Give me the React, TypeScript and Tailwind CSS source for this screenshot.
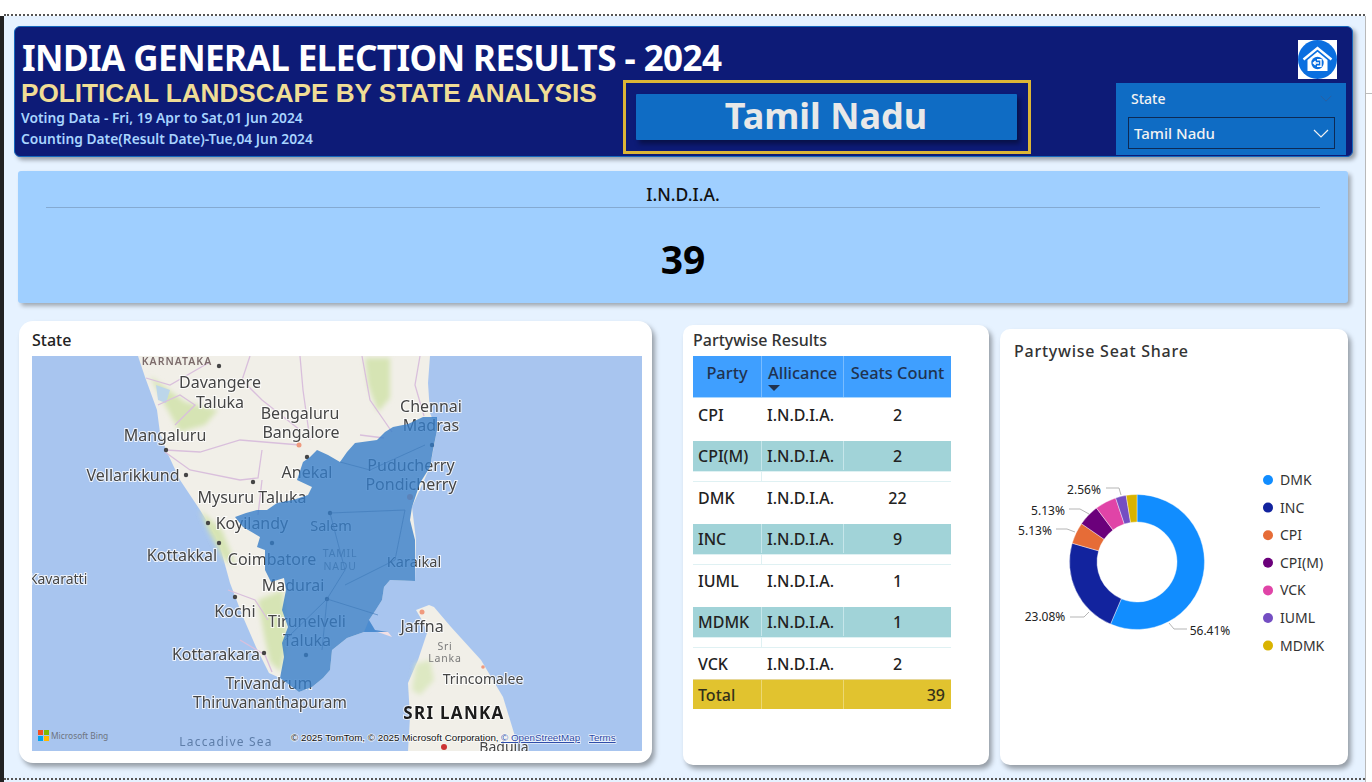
import React from 'react';

const UI = "font-['Noto_Sans',sans-serif]";

interface Row {
  party: string;
  seats: number;
  band: boolean;
  height: string;
}

const rows: Row[] = [
  { party: 'CPI', seats: 2, band: false, height: 'h-[43px] pb-[10px]' },
  { party: 'CPI(M)', seats: 2, band: true, height: 'h-[30px] pb-[1px]' },
  { party: 'DMK', seats: 22, band: false, height: 'h-[42px] pb-[11px]' },
  { party: 'INC', seats: 9, band: true, height: 'h-[30px] pb-[1px]' },
  { party: 'IUML', seats: 1, band: false, height: 'h-[42px] pb-[11px]' },
  { party: 'MDMK', seats: 1, band: true, height: 'h-[30px] pb-[1px]' },
  { party: 'VCK', seats: 2, band: false, height: 'h-[31px]' },
];

const slices = [
  { name: 'DMK', value: 22, color: '#118dff' },
  { name: 'INC', value: 9, color: '#12239e' },
  { name: 'CPI', value: 2, color: '#e66c37' },
  { name: 'CPI(M)', value: 2, color: '#6b007b' },
  { name: 'VCK', value: 2, color: '#e044a7' },
  { name: 'IUML', value: 1, color: '#744ec2' },
  { name: 'MDMK', value: 1, color: '#d9b300' },
];

const arcPath = (from: number, to: number, cx: number, cy: number, r1: number, r2: number) => {
  const p = (a: number, r: number) => {
    const t = (a / 39) * Math.PI * 2;
    return `${(cx + Math.sin(t) * r).toFixed(2)} ${(cy - Math.cos(t) * r).toFixed(2)}`;
  };
  const large = (to - from) / 39 > 0.5 ? 1 : 0;
  return `M${p(from, r2)} A${r2} ${r2} 0 ${large} 1 ${p(to, r2)} L${p(to, r1)} A${r1} ${r1} 0 ${large} 0 ${p(from, r1)} Z`;
};

const HomeIcon = () => (
  <svg width="39" height="39" viewBox="0 0 39 39" className="shrink-0">
    <rect width="39" height="39" fill="#ffffff" />
    <ellipse cx="19.5" cy="19.5" rx="19.5" ry="19.5" fill="#0b6fe0" />
    <path d="M5.5 19.5 L19.5 8 L33.5 19.5" fill="none" stroke="#ffffff" strokeWidth="2.4" />
    <path d="M9.5 20 L19.5 11.8 L29.5 20 V31 H9.5 Z" fill="#ffffff" />
    <circle cx="19.5" cy="23" r="6.2" fill="#0b6fe0" />
    <path d="M19 19.8 H23 V26.2 H19" fill="none" stroke="#ffffff" strokeWidth="1.4" />
    <path d="M21 23 H15.5 M17.6 20.9 L15.4 23 L17.6 25.1" fill="none" stroke="#ffffff" strokeWidth="1.4" />
  </svg>
);

const Chevron = ({ color, size }: { color: string; size: number }) => (
  <svg width={size} height={size / 2 + 1} viewBox="0 0 16 9">
    <path d="M1 1 L8 8 L15 1" fill="none" stroke={color} strokeWidth="1.2" />
  </svg>
);

const labels: [string, number, number, number?][] = [
  ['Davangere', 220, 388],
  ['Taluka', 220, 408],
  ['Bengaluru', 300, 419],
  ['Bangalore', 301, 438],
  ['Chennai', 431, 412],
  ['Madras', 431, 431],
  ['Mangaluru', 165, 441],
  ['Vellarikkund', 133, 481],
  ['Anekal', 307, 478],
  ['Puducherry', 411, 471],
  ['Pondicherry', 411, 490],
  ['Mysuru Taluka', 252, 503],
  ['Koyilandy', 252, 529],
  ['Salem', 331, 531, 14.5],
  ['Kottakkal', 182, 561],
  ['Coimbatore', 272, 565],
  ['Karaikal', 414, 567, 14.5],
  ['Kavaratti', 58, 584, 14],
  ['Madurai', 293, 591],
  ['Kochi', 235, 617],
  ['Tirunelveli', 307, 627],
  ['Taluka', 307, 646],
  ['Kottarakara', 216, 660],
  ['Jaffna', 422, 632],
  ['Trincomalee', 483, 684, 14],
  ['Trivandrum', 269, 689],
  ['Thiruvananthapuram', 270, 708, 15.4],
  ['Badulla', 504, 752, 14],
];

const dots: [number, number][] = [
  [219, 366], [166, 450], [186, 475], [253, 482], [307, 457], [208, 523], [219, 543], [235, 597],
  [264, 653], [327, 599], [306, 655], [272, 543], [330, 513], [432, 445],
];

const MapSketch = () => (
  <svg viewBox="32 356 610 395" width="610" height="395" className="block" fontFamily="'Noto Sans', sans-serif">
    <defs>
      <filter id="soft" x="0" y="0" width="100%" height="100%">
        <feGaussianBlur stdDeviation="0.35" />
      </filter>
      <filter id="wash" x="-20%" y="-20%" width="140%" height="140%">
        <feGaussianBlur stdDeviation="2.5" />
      </filter>
    </defs>
    <rect x="32" y="356" width="610" height="395" fill="#a8c5ef" />
    <g filter="url(#soft)">
      {/* mainland */}
      <path
        d="M138 356 L145 377 L157 410 L160 433 L166 450 L180 480 L200 510 L208 523 L219 543 L221 550 L230 583 L243 617 L256 647 L269 673 L280 678 L299 692 L312 687 L323 678 L330 670 L332 650 L347 638 L364 632 L369 620 L382 600 L384 587 L390 580 L415 581 L416 540 L412 507 L430 467 L437 430 L430 413 L428 383 L430 356 Z"
        fill="#f1efe8"
      />
      {/* greenery */}
      <g filter="url(#wash)" fill="#d6e4b4">
        <path d="M150 376 L185 402 L218 410 L205 425 L180 432 L165 405 Z" />
        <path d="M365 358 L390 358 L390 398 L378 412 L368 385 Z" />
        <path d="M200 510 L222 530 L236 566 L224 560 L208 530 Z" />
        <path d="M258 600 L283 590 L287 640 L281 672 L270 662 L264 635 Z" />
        <path d="M418 664 L432 660 L434 680 L420 695 L413 690 Z" />
      </g>
      <path d="M156 385 L170 390 L166 403 L158 400 Z" fill="#bcd6ea" />
      {/* roads */}
      <g fill="none" stroke="#d9bfdc" strokeWidth="1.3">
        <path d="M165 450 L200 452 L240 440 L300 445 M165 452 L190 470 L240 480 L258 478 L262 450" />
        <path d="M158 405 L180 395 L195 405 L175 425 M146 378 L170 385 L210 362 M250 356 L242 380 L262 400 L300 430" />
        <path d="M362 356 L370 400 L392 432 M420 356 L415 385 L424 416 M300 356 L303 390 L310 440" />
        <path d="M360 435 L384 438 M262 480 L258 515 M228 590 L255 600 L268 620 M240 640 L265 655 L272 672" />
      </g>
      {/* Sri Lanka */}
      <path
        d="M429 605 L434 607 L451 627 L481 660 L503 697 L514 733 L516 751 L408 751 L410 717 L408 683 L418 660 L427 633 L423 622 L416 610 Z"
        fill="#f1efe8"
      />
      <path d="M416 664 L430 660 L434 680 L420 695 L412 690 Z" fill="#dde8c2" filter="url(#wash)" />
      <path d="M375 631 L388 632 L392 637 Z" fill="#f3e0e4" />
      {/* place labels */}
      <g fill="#444444" textAnchor="middle" stroke="#ffffff" strokeOpacity="0.8" strokeWidth="2" paintOrder="stroke">
        {labels.map(([name, x, y, size]) => (
          <text key={`${name}${y}`} x={x} y={y} fontSize={size ?? 16}>
            {name}
          </text>
        ))}
      </g>
      <text x="177" y="365" textAnchor="middle" fontSize="10.5" fontWeight="600" letterSpacing="1" fill="#7b6b6b">KARNATAKA</text>
      <g fill="#7a7a7a" fontSize="10.5" textAnchor="middle" letterSpacing="0.8">
        <text x="445" y="650">Sri</text>
        <text x="445" y="662">Lanka</text>
        <text x="340" y="557">TAMIL</text>
        <text x="340" y="570">NADU</text>
      </g>
      <text x="454" y="719" textAnchor="middle" fontSize="17" fontWeight="700" letterSpacing="1.3" fill="#1b1b1b" stroke="#ffffff" strokeOpacity="0.7" strokeWidth="2" paintOrder="stroke">SRI LANKA</text>
      <text x="226" y="746" textAnchor="middle" fontSize="12" letterSpacing="1.2" fill="#5d7da8">Laccadive Sea</text>
      {dots.map(([x, y]) => (
        <circle key={`${x}-${y}`} cx={x} cy={y} r="2.2" fill="#444444" />
      ))}
      <circle cx="422" cy="612" r="2.5" fill="#ef9a7e" />
      <circle cx="410" cy="497" r="3" fill="#ef9a7e" />
      <circle cx="299" cy="445" r="2.5" fill="#ef9a7e" />
      <circle cx="444" cy="747" r="3" fill="#cc3333" />
      <circle cx="483" cy="667" r="1.8" fill="#ef9a7e" />
      {/* Tamil Nadu overlay */}
      <path
        d="M235 517 L246 513 L257 510 L267 510 L277 503 L293 500 L308 495 L312 487 L297 480 L303 462 L310 457 L317 450 L328 455 L340 462 L347 452 L355 443 L377 440 L385 432 L393 427 L408 424 L423 417 L437 417 L437 430 L433 450 L430 467 L420 483 L412 507 L410 520 L415 540 L415 581 L390 580 L384 587 L382 600 L375 611 L369 620 L375 630 L388 632 L364 632 L347 638 L332 650 L330 670 L323 678 L312 687 L299 692 L280 678 L284 657 L282 643 L288 627 L282 610 L286 590 L284 578 L271 582 L265 570 L265 550 L257 547 L260 537 L243 527 Z"
        fill="#367dc8"
        fillOpacity="0.8"
      />
      <g fill="none" stroke="#3f78b8" strokeWidth="1" opacity="0.6">
        <path d="M340 462 L370 470 L425 445 M330 513 L405 510 M330 513 L345 570 L327 599 L322 650 M405 510 L395 560 L345 585 M327 599 L285 640 M327 599 L378 615" />
      </g>
    </g>
    {/* Bing mark */}
    <rect x="38" y="730" width="5" height="5" fill="#f25022" />
    <rect x="44" y="730" width="5" height="5" fill="#7fba00" />
    <rect x="38" y="736" width="5" height="5" fill="#00a4ef" />
    <rect x="44" y="736" width="5" height="5" fill="#ffb900" />
    <text x="51" y="739" fontSize="8.4" fill="#6d7480">Microsoft Bing</text>
    <g fontFamily="'Liberation Sans', sans-serif" fontSize="9.8" stroke="#ffffff" strokeOpacity="0.8" strokeWidth="1.5" paintOrder="stroke">
      <text x="291" y="741" fill="#111111">© 2025 TomTom, © 2025 Microsoft Corporation,</text>
      <text x="501" y="741" fill="#2b4aa8" textDecoration="underline">© OpenStreetMap</text>
      <text x="589" y="741" fill="#2b4aa8" textDecoration="underline">Terms</text>
    </g>
  </svg>
);

const pctLabels: [string, number, number, string][] = [
  ['56.41%', 1210, 635, 'M1169 623 L1174 629 L1187 629'],
  ['23.08%', 1045, 621, 'M1089 612 L1084 617 L1070 617'],
  ['5.13%', 1035, 535, 'M1075 532 L1067 529 L1056 529'],
  ['5.13%', 1048, 515, 'M1089 514 L1080 509 L1069 509'],
  ['2.56%', 1084, 494, 'M1121 495 L1119 488 L1106 488'],
];

const Donut = () => {
  let at = 0;
  return (
    <svg viewBox="1000 450 348 230" width="348" height="230" className="block" fontFamily="'Noto Sans', sans-serif">
      {slices.map((s) => {
        const d = arcPath(at, at + s.value, 1137, 562, 40, 67.5);
        at += s.value;
        return <path key={s.name} d={d} fill={s.color} stroke="#ffffff" strokeWidth="0.4" />;
      })}
      {pctLabels.map(([t, x, y, line]) => (
        <g key={`${t}${y}`}>
          <path d={line} fill="none" stroke="#b5b5b5" strokeWidth="1" />
          <text x={x} y={y} textAnchor="middle" fontSize="12" fill="#222222">{t}</text>
        </g>
      ))}
      {slices.map((s, i) => (
        <g key={s.name}>
          <circle cx="1268" cy={480 + i * 27.6} r="5" fill={s.color} />
          <text x="1280" y={485 + i * 27.6} fontSize="14" fill="#333333">{s.name}</text>
        </g>
      ))}
    </svg>
  );
};

const App: React.FC = () => {
  return (
    <div className={`${UI} w-[1372px] h-[782px] overflow-hidden bg-white flex flex-col`}>
      {/* top dotted edge */}
      <div className="h-[16px] ml-[4px] w-[1361px] border-b-2 border-dotted border-[#555555]" />

      <div className="flex h-[766px]">
        <div className="w-[4px] bg-[#222222]" />
        <div className="w-[1362px] bg-[#e6f2ff] border-r border-[#b9b9b9] flex flex-col">
          {/* Header */}
          <header className="mt-[10px] ml-[10px] w-[1339px] h-[131px] bg-[#0d1b77] rounded-md border border-[#1668bd] shadow-[3px_3px_4px_rgba(0,0,0,0.35)] flex flex-col">
            <div className="h-[55px] flex items-start justify-between pl-[7px] pr-[15px] pt-[13px]">
              <h1 className="text-[35px] leading-[36px] font-bold text-white whitespace-nowrap tracking-[-0.55px]">
                INDIA GENERAL ELECTION RESULTS - 2024
              </h1>
              <HomeIcon />
            </div>
            <div className="flex items-start pl-[6px]">
              <div className="w-[602px]">
                <div className="font-['Liberation_Sans',sans-serif] font-bold text-[26.15px] leading-[28px] text-[#f0dd95] whitespace-nowrap -mt-[3px]">
                  POLITICAL LANDSCAPE BY STATE ANALYSIS
                </div>
                <div className="text-[13.8px] leading-[21px] font-semibold text-[#a8d4ff] whitespace-nowrap">
                  <div>Voting Data - Fri, 19 Apr to Sat,01 Jun 2024</div>
                  <div>Counting Date(Result Date)-Tue,04 Jun 2024</div>
                </div>
              </div>
              <div className="mt-[-2px] w-[408px] h-[74px] border-[3px] border-[#dcb636] flex items-center justify-center pr-[2px]">
                <div className="w-[381px] h-[46px] bg-[#0f6cc4] rounded-[1px] shadow-[3px_4px_5px_rgba(0,0,0,0.4)] flex items-center justify-center pb-[2px] text-[36px] font-bold text-[#e8e8e8]">
                  Tamil Nadu
                </div>
              </div>
              <div className="ml-[85px] mt-[1px] w-[230px] h-[72px] bg-[#0f6cc4] px-[12px] pt-[6px]">
                <div className="flex items-center justify-between h-[19px] pl-[3px] pr-[2px]">
                  <span className="text-[14px] font-medium text-[#f2f2f2]">State</span>
                  <Chevron color="#2a5f9e" size={12} />
                </div>
                <div className="mt-[9px] h-[32px] w-[207px] border border-[#0d2a55] flex items-center justify-between pl-[5px] pr-[5px]">
                  <span className="text-[15px] font-medium text-[#f2f2f2]">Tamil Nadu</span>
                  <Chevron color="#f2f2f2" size={16} />
                </div>
              </div>
            </div>
          </header>

          {/* KPI */}
          <section className="mt-[14px] ml-[14px] w-[1330px] h-[132px] bg-[#9fcfff] rounded-[3px] shadow-[3px_3px_4px_rgba(0,0,0,0.3)] flex flex-col items-center">
            <div className="h-[37px] w-[1274px] border-b border-[#84aad2] flex items-end justify-center pb-[2px] text-[17.5px] leading-[22px] font-medium text-[#111111]">
              I.N.D.I.A.
            </div>
            <div className="mt-[24px] text-[39px] leading-[54px] font-bold text-black">39</div>
          </section>

          {/* Bottom row */}
          <div className="mt-[18px] flex items-start">
            <section className="ml-[15px] w-[633px] h-[442px] bg-white rounded-[14px] shadow-[3px_4px_5px_rgba(0,0,0,0.35)] pl-[13px] pt-[8px]">
              <div className="h-[27px] text-[16px] leading-[22px] font-medium text-[#222222]">State</div>
              <MapSketch />
            </section>

            <section className="ml-[31px] mt-[4px] w-[306px] h-[440px] bg-white rounded-[10px] shadow-[3px_4px_5px_rgba(0,0,0,0.35)] pl-[10px] pt-[4px]">
              <div className="h-[27px] text-[16px] leading-[22px] font-medium text-[#333333]">Partywise Results</div>
              <div className="w-[258px] text-[16px] font-medium text-[#222222]">
                <div className="h-[42px] bg-[#3f9fff] grid grid-cols-[69px_82px_107px] border-b border-[#a8d6ff] text-[#20324f] text-[16.4px]">
                  <div className="border-r border-[#79bcff] text-center pt-[4px] leading-[26px]">Party</div>
                  <div className="relative border-r border-[#79bcff] pl-[6px] pt-[4px] leading-[26px]">
                    Allicance
                    <span className="absolute left-[6px] top-[29px] w-0 h-0 border-x-[6px] border-x-transparent border-t-[6px] border-t-[#20324f]" />
                  </div>
                  <div className="text-center pt-[4px] leading-[26px] whitespace-nowrap">Seats Count</div>
                </div>
                {rows.map((r) => (
                  <React.Fragment key={r.party}>
                    <div className={`grid grid-cols-[69px_82px_107px] ${r.height} ${r.band ? 'bg-[#a1d3d8]' : ''}`}>
                      <div className={`flex items-center pl-[5px] ${r.band ? 'border-r border-[#c6e6ea]' : ''}`}>{r.party}</div>
                      <div className={`flex items-center pl-[5px] ${r.band ? 'border-r border-[#c6e6ea]' : ''}`}>I.N.D.I.A.</div>
                      <div className="flex items-center justify-center">{r.seats}</div>
                    </div>
                    {r.band && (
                      <div className="h-[11px] grid grid-cols-[69px_82px_107px] border-t border-b border-[#dff1f3]">
                        <div className="border-r border-[#dff1f3]" />
                      </div>
                    )}
                  </React.Fragment>
                ))}
                <div className="h-[30px] bg-[#e1c32f] grid grid-cols-[69px_82px_107px] border-t border-[#e6d79a] text-[#33301a]">
                  <div className="border-r border-[#ecd873] flex items-center pl-[5px]">Total</div>
                  <div className="border-r border-[#ecd873]" />
                  <div className="flex items-center justify-end pr-[6px]">39</div>
                </div>
              </div>
            </section>

            <section className="ml-[11px] mt-[8px] w-[348px] h-[436px] bg-white rounded-[10px] shadow-[3px_4px_5px_rgba(0,0,0,0.35)]">
              <div className="h-[121px] pl-[14px] pt-[10px] text-[16px] leading-[24px] font-medium text-[#333333] tracking-[0.75px]">
                Partywise Seat Share
              </div>
              <Donut />
            </section>
          </div>

          <div className="mt-auto h-[2px] border-b-2 border-dotted border-[#555555]" />
          <div className="h-[2px]" />
        </div>
        {/* stray rule right of the canvas */}
        <div className="w-[6px] mt-[77px] h-px bg-[#bdbdbd]" />
      </div>
    </div>
  );
};

export default App;
